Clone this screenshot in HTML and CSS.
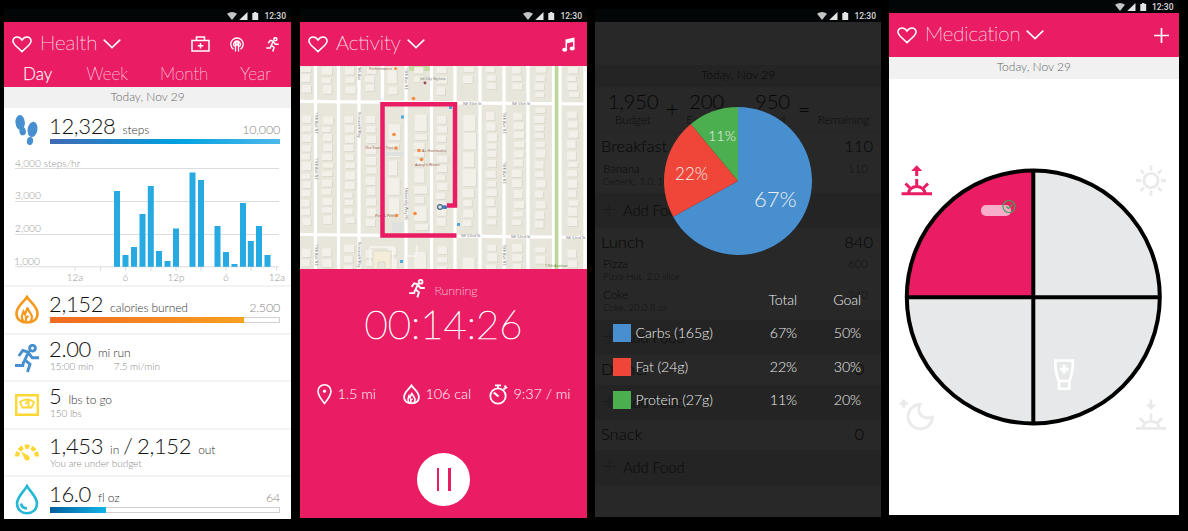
FILE: index.html
```html
<!DOCTYPE html>
<html lang="en">
<head>
<meta charset="utf-8">
<title>Health</title>
<link rel="stylesheet" href="styles.css">
</head>
<body>
<svg class="defs" width="0" height="0">
  <defs>
    <symbol id="status" viewBox="0 0 32 8"><path d="M0 1.8Q5 -1.6 10 1.8L5 8Z" fill="#c4c4c4"/><path d="M20.500 0V8H12.200Z" fill="#e4e4e4"/><path d="M25.300 1H27V0H29.500V1H31.200V8H25.300Z" fill="#e4e4e4"/></symbol>
    <symbol id="heart" viewBox="0 0 20 17"><path d="M10 15.600L3.200 9.200C-1.200 4.800 1.700 1 5 1C7.500 1 9.200 2.700 10 4C10.800 2.700 12.500 1 15 1C18.300 1 21.200 4.800 16.800 9.200Z" fill="none" stroke="#fff" stroke-width="1.500"/></symbol>
    <symbol id="chevron" viewBox="0 0 18 10"><path d="M.7 .7L9 8.700L17.300 .7" fill="none" stroke="#fff" stroke-width="1.600"/></symbol>
    <symbol id="runner" viewBox="0 0 24 29"><g fill="none" stroke="currentColor" stroke-width="2.900"><circle cx="17.500" cy="4.200" r="2.900"/><path d="M3.800 12L7.800 6.500L13.500 8.200L9.800 16L15 20.200L12.500 28M13.500 9L17.300 13.800H24M8.800 17L7.800 21.500H0"/></g></symbol>
    <symbol id="flame" viewBox="0 0 24 29"><path d="M12 2C15 7 22.500 11 22.500 18.500C22.500 24.500 18 27.500 12 27.500S1.500 24.500 1.500 18.500C1.500 11 9 7 12 2Z" fill="none" stroke="currentColor" stroke-width="2.600"/><path d="M9 27C5.500 23 7 20 8.500 16.500L10 19.500L12.500 12.500C13 16 17 19 17 22C17 24 16 26 15 27M11 27V22.500L13.500 21" fill="none" stroke="currentColor" stroke-width="2.200"/></symbol>
  </defs>
</svg>
<main class="screens">

<section class="phone health">
  <div class="status"><svg class="status-icons"><use href="#status"/></svg><span>12:30</span></div>
  <header class="bar">
    <svg class="heart"><use href="#heart"/></svg><h1>Health</h1><svg class="chevron"><use href="#chevron"/></svg>
    <div class="actions">
      <svg width="19" height="16" viewBox="0 0 19 16" fill="none" stroke="#fff" stroke-width="1.500"><path d="M1 4.500H18V15H1ZM5.500 4.500V1H13.500V4.500M9.500 7V12.500M6.700 9.700H12.300"/></svg>
      <svg width="14" height="15" viewBox="0 0 14 15" fill="none" stroke="#fff" stroke-width="1.300"><path d="M3.500 12.300A6.200 6.200 0 1 1 10.500 12.300M4.500 9.500A3.300 3.300 0 1 1 9.500 9.500M5.500 14.500V8M8.500 14.500V8M5.500 4.500V8H8.500V4.500M7 4.500V8"/></svg>
      <svg class="run-small"><use href="#runner"/></svg>
    </div>
  </header>
  <nav class="tabs"><span class="tab active">Day</span><span class="tab">Week</span><span class="tab">Month</span><span class="tab">Year</span></nav>
  <div class="date">Today, Nov 29</div>

  <article class="metric first">
    <svg width="24" height="31" viewBox="0 0 24 31" fill="#478fcf"><ellipse cx="5.200" cy="7.500" rx="4.700" ry="7.500" transform="rotate(-4 5 8)"/><ellipse cx="7.800" cy="16.300" rx="3.200" ry="4" transform="rotate(-10 8 17)"/><ellipse cx="17.600" cy="14.500" rx="4.900" ry="7.700" transform="rotate(10 18 14)"/><ellipse cx="15" cy="26" rx="3.100" ry="4" transform="rotate(10 15 26)"/></svg>
    <div>
      <p class="line"><b>12,328</b><span>steps</span><em>10,000</em></p>
      <div class="meter full"></div>
    </div>
  </article>
  <svg class="chart" width="287" height="133" viewBox="4 152 287 133">
    <g class="grid"><path d="M15 168.500H279M15 201.500H279M15 234.500H279M15 266.800H279"/><path d="M75 267V271M100.500 267V271M125.500 267V271M151 267V271M176 267V271M201 267V271M226 267V271M251 267V271M276.500 267V271"/></g>
    <g id="bars" class="bars"></g>
    <g class="axis"><text x="15" y="166.500">4,000 steps/hr</text><text x="15" y="199">3,000</text><text x="15" y="232">2,000</text><text x="14" y="265">1,000</text></g>
    <g class="axis hours"><text x="75" y="281">12a</text><text x="125.500" y="281">6</text><text x="176" y="281">12p</text><text x="226" y="281">6</text><text x="277" y="281">12a</text></g>
  </svg>
  <article class="metric">
    <svg class="flame orange" width="24" height="29"><use href="#flame"/></svg>
    <div>
      <p class="line"><b>2,152</b><span>calories burned</span><em>2,500</em></p>
      <div class="meter"><div class="fill burn"></div></div>
    </div>
  </article>
  <article class="metric two">
    <svg class="blue" width="24" height="29"><use href="#runner"/></svg>
    <div>
      <p class="line"><b>2.00</b><span>mi run</span></p>
      <p class="sub"><span>15:00 min</span><span>7.5 mi/min</span></p>
    </div>
  </article>
  <article class="metric two">
    <svg class="scale" width="24" height="22" viewBox="0 0 24 22" fill="none" stroke="#fdd835" stroke-width="2.400"><path d="M1.200 1.200H22.800V20.800H1.200Z"/><path d="M5 8Q12 3 19 8L16.500 13.500H7.500ZM10.500 10L13.500 6.500V13" stroke-width="1.800"/></svg>
    <div>
      <p class="line"><b>5</b><span>lbs to go</span></p>
      <p class="sub">150 lbs</p>
    </div>
  </article>
  <article class="metric two budget">
    <svg width="24" height="17" viewBox="0 0 24 17"><path d="M2.100 12.500A9.900 9.900 0 0 1 21.900 12.500" fill="none" stroke="#fdd835" stroke-width="4.200" stroke-dasharray="4.700 1.900"/><path d="M6 7.500L13.500 11.800A2.600 2.600 0 1 1 9.800 15.200Z" fill="#fdd835"/></svg>
    <div>
      <p class="line"><b>1,453</b><span>in</span><b class="slash">/ 2,152</b><span>out</span></p>
      <p class="sub">You are under budget</p>
    </div>
  </article>
  <article class="metric water">
    <svg width="24" height="31" viewBox="0 0 24 31" fill="none" stroke="#22b8d6" stroke-width="2.600"><path d="M12 2C15 7.500 22 13 22 19.500C22 25.500 17.500 29.200 12 29.200S2 25.500 2 19.500C2 13 9 7.500 12 2Z"/><path d="M6 19.500Q6.500 24 12 24.500"/></svg>
    <div>
      <p class="line"><b>16.0</b><span>fl oz</span><em>64</em></p>
      <div class="meter"><div class="fill drink"></div></div>
    </div>
  </article>
</section>

<section class="phone activity">
  <div class="status"><svg class="status-icons"><use href="#status"/></svg><span>12:30</span></div>
  <header class="bar">
    <svg class="heart"><use href="#heart"/></svg><h1>Activity</h1><svg class="chevron"><use href="#chevron"/></svg>
    <div class="actions"><svg width="13" height="15" viewBox="0 0 13 15" fill="#fff"><path d="M3.500 2.500L12.500 .5V11.500H11V5L5 6.300V13H3.500Z"/><ellipse cx="2.700" cy="12.700" rx="2.500" ry="2"/><ellipse cx="10.200" cy="11.500" rx="2.500" ry="2"/></svg></div>
  </header>
  <svg class="map" width="287" height="203" viewBox="300 66 287 203">
    <rect x="300" y="66" width="287" height="203" fill="#e8e5da"/>
    <rect x="409" y="66" width="21" height="5" fill="#c4dda3"/>
    <g id="houses"></g>
    <g fill="none" stroke="#fff" stroke-width="3.200">
      <path d="M315.500 66V269M338.500 66V269M359 66V269M382.500 66V235M406 66V269M431.500 66V269M455 66V269M480 66V269M504 66V269M528 66V269M553.500 66V269M560 66V269M585 66V269"/>
      <path d="M300 101.300L587 104M300 234.500L587 237.500"/>
    </g>
    <path d="M556.500 66V269" stroke="#bdd79b" stroke-width="3.500"/>
    <path d="M385 152H404V156H385ZM392 232V222H404V232Z" fill="#dfe1df"/>
    <path d="M370 265V247H393V266M408 256H417V245" fill="none" stroke="#f6f5f1" stroke-width="1.500"/>
    <path d="M373 251H391V269H385V262H378V269H373Z" fill="#f3edd9" stroke="#d9d5c6" stroke-width=".8"/>
    <g class="street"><text x="463" y="105">NE 55th St</text><text x="512" y="105">NE 55th St</text><text x="461" y="237">NE 52nd St</text><text x="511" y="237.500">NE 52nd St</text><text x="566" y="238.500">NE 52nd St</text>
      <text transform="translate(314.500 158) rotate(90)">11th Ave NE</text><text transform="translate(314.500 112) rotate(90)">11th Ave NE</text><text transform="translate(358 112) rotate(90)">Roosevelt Way</text><text transform="translate(405 188) rotate(90)">University Way NE</text><text transform="translate(405 68) rotate(90)">12th Ave NE</text><text transform="translate(358 67) rotate(90)">9th Ave</text><text transform="translate(503 112) rotate(90)">15th Ave NE</text><text transform="translate(503 162) rotate(90)">15th Ave NE</text><text transform="translate(503 244) rotate(90)">15th Ave NE</text><text transform="translate(358 242) rotate(90)">Roosevelt Way</text><text transform="translate(314.500 244) rotate(90)">11th Ave NE</text><text x="420" y="79.500">Jet City Stylists</text><text x="545" y="267" class="green">17th Avenue</text></g>
    <g class="place"><text x="369" y="69.500">Performance</text><text x="365" y="149">The Scarlet Tree</text><text x="422" y="151.500">A+ Hairstudio</text><text x="415" y="166">Avery's Wines</text><text x="375" y="217">Pies &amp; Pints</text></g>
    <g fill="#f58b3d"><circle cx="395.500" cy="68.500" r="1.500"/><circle cx="413.500" cy="98.500" r="1.800"/><circle cx="394" cy="134.500" r="1.800"/><circle cx="396" cy="148" r="1.800"/><circle cx="419" cy="150.500" r="1.800"/><circle cx="421.500" cy="159.500" r="1.800"/><circle cx="396.500" cy="215.500" r="1.700"/><circle cx="415" cy="213.500" r="1.800"/></g>
    <circle cx="425" cy="83" r="1.400" fill="#a8405c"/>
    <path d="M401 115.500H404V118.500H401ZM449 106H452V109H449ZM457 223H460V226H457ZM400 260H403V263H400Z" fill="#4ba9de"/>
    <circle cx="440" cy="207" r="2.400" fill="#dce5e9" stroke="#496680" stroke-width="1.200"/><rect x="442.500" y="205.300" width="4.500" height="3.800" rx="1.500" fill="#3f78bd"/>
    <path d="M447 205.500H455V104.200H382.500V235.500H456.500" fill="none" stroke="#e91c64" stroke-width="4.500"/>
  </svg>
  <div class="session">
    <p class="mode"><svg width="16" height="19"><use href="#runner"/></svg><span>Running</span></p>
    <p class="timer">00:14:26</p>
    <div class="stats">
      <p><svg width="15" height="21" viewBox="0 0 15 21" fill="none" stroke="#fff" stroke-width="1.600"><path d="M7.500 19.500Q1 11.500 1 7.200A6.500 6.400 0 0 1 14 7.200Q14 11.500 7.500 19.500Z"/><circle cx="7.500" cy="7.200" r="1.600" fill="#fff" stroke="none"/></svg><span>1.5 mi</span></p>
      <p><svg width="17" height="20.500"><use href="#flame"/></svg><span>106 cal</span></p>
      <p><svg width="19" height="21" viewBox="0 0 19 21" fill="none" stroke="#fff" stroke-width="1.800"><circle cx="9" cy="12" r="7.700"/><path d="M6 1.300H12M9 1V4M14.500 5.500L17 3M15.500 1.700L18 4.200"/><path d="M9.500 12.500L4.800 8.500" stroke-width="2.200"/></svg><span>9:37 / mi</span></p>
    </div>
    <div class="pause"><i></i><i></i></div>
  </div>
</section>

<section class="phone food">
  <div class="status"><svg class="status-icons"><use href="#status"/></svg><span>12:30</span></div>
  <div class="diary">
    <div class="blank"></div>
    <div class="date">Today, Nov 29</div>
    <div class="totals"><p><b>1,950</b><span>Budget</span></p><i>+</i><p><b>200</b><span>Exercise</span></p><i></i><p><b>950</b><span>Food</span></p><i>=</i><p><b>&nbsp;</b><span>Remaining</span></p></div>
    <div class="meal"><span>Breakfast</span><span>110</span></div>
    <div class="item"><p><b>Banana</b><span>110</span></p><small>Generic, 1.0, 100g</small></div>
    <div class="add"><i></i><span>Add Food</span></div>
    <div class="meal lunch"><span>Lunch</span><span>840</span></div>
    <div class="item lunch-item"><p><b>Pizza</b><span>600</span></p><small>Pizza Hut, 2.0 slice</small></div>
    <div class="item"><p><b>Coke</b><span>240</span></p><small>Coke, 20.0 fl oz</small></div>
    <div class="add"><i></i><span>Add Food</span></div>
    <div class="meal empty"><span>Dinner</span><span>0</span></div>
    <div class="add"><i></i><span>Add Food</span></div>
    <div class="meal empty"><span>Snack</span><span>0</span></div>
    <div class="add"><i></i><span>Add Food</span></div>
  </div>
  <div class="overlay">
    <svg class="pie" width="148" height="148" viewBox="-74 -74 148 148">
      <path d="M0 0V-74A74 74 0 1 1 -64.850 35.650Z" fill="#478fcf"/><path d="M0 0L-64.850 35.650A74 74 0 0 1 -47.170 -57.020Z" fill="#ef4639"/><path d="M0 0L-47.170 -57.020A74 74 0 0 1 0 -74Z" fill="#4baf4f"/>
      <text x="37.300" y="26" font-size="22">67%</text><text x="-46.500" y="-1.500" font-size="17">22%</text><text x="-16" y="-40.500" font-size="14.500">11%</text>
    </svg>
    <div class="legend">
      <div class="entry head"><span></span><span></span><span>Total</span><span>Goal</span></div>
      <div class="entry"><i class="carbs"></i><span>Carbs (165g)</span><span>67%</span><span>50%</span></div>
      <div class="entry"><i class="fat"></i><span>Fat (24g)</span><span>22%</span><span>30%</span></div>
      <div class="entry"><i class="protein"></i><span>Protein (27g)</span><span>11%</span><span>20%</span></div>
    </div>
  </div>
</section>

<section class="phone medication">
  <div class="status"><svg class="status-icons"><use href="#status"/></svg><span>12:30</span></div>
  <header class="bar">
    <svg class="heart"><use href="#heart"/></svg><h1>Medication</h1><svg class="chevron"><use href="#chevron"/></svg>
    <div class="actions"><svg width="15" height="15" viewBox="0 0 15 15"><path d="M7.500 0V15M0 7.500H15" stroke="#fff" stroke-width="1.700"/></svg></div>
  </header>
  <div class="date">Today, Nov 29</div>
  <svg class="wheel" width="290" height="436" viewBox="889 79 290 436">
    <circle cx="1033.300" cy="297" r="127" fill="#e7e8e9"/>
    <path d="M1033.300 297V170A127 127 0 0 0 906.300 297Z" fill="#e91c64"/>
    <circle cx="1033.300" cy="297" r="126.500" fill="none" stroke="#000" stroke-width="4"/>
    <path d="M1033.300 170V424M906 297.300H1160" stroke="#000" stroke-width="4"/>
    <rect x="981" y="205" width="30" height="11" rx="5" fill="#f8aeca"/>
    <g fill="none" stroke="#3fa756" stroke-width="1.200"><circle cx="1009" cy="206.500" r="6"/><path d="M1006 206.500L1008.500 208.500L1012.500 204.500"/></g>
    <g fill="none" stroke="#fff" stroke-width="2.600"><path d="M1055.400 360.500H1072.800Q1073.300 371 1069.500 381H1058.700Q1054.900 371 1055.400 360.500ZM1059 381.500V388.700H1069.300V381.500"/><path d="M1064.200 365V373.500M1060 369.200H1068.500" stroke-width="3"/></g>
    <g fill="none" stroke="#e91c64" stroke-width="3"><path d="M901.500 193.800H932M908.500 193A8.300 7.300 0 0 1 925 193" /><path d="M916.700 179V185.500M905.500 183.500L910 188M928 183.500L923.500 188M916.700 170V176"/><path d="M911.200 171L916.700 165.300L922.200 171Z" fill="#e91c64" stroke="none"/></g>
    <g fill="none" stroke="#e9eaeb" stroke-width="2.800"><circle cx="1151" cy="180.500" r="7.200"/><path d="M1151 165.300V170.500M1151 190.500V195.700M1136 180.500H1141M1161 180.500H1166M1140.500 170L1144 173.500M1158 187.500L1161.500 191M1140.500 191L1144 187.500M1158 173.500L1161.500 170"/></g>
    <g fill="none" stroke="#e9eaeb" stroke-width="2.800"><path d="M920 404.500A12.200 12.200 0 1 0 932.500 417C923 420.500 916 413 920 404.500Z"/><path d="M903.700 399.500V407.700M899.600 403.600H907.800" stroke-width="3"/></g>
    <g fill="none" stroke="#e9eaeb" stroke-width="2.800"><path d="M1136 428.300H1166M1142.800 427.500A8.300 7.300 0 0 1 1159.200 427.500M1151 413.500V420M1139.700 418L1144.200 422.500M1162.200 418L1157.700 422.500M1151 399.500V405"/><path d="M1145.800 404.500L1151 410L1156.200 404.500Z" fill="#e9eaeb" stroke="none"/></g>
  </svg>
</section>
</main>
<script src="draw.js"></script>
</body>
</html>
```

FILE: styles.css
```css
* { box-sizing: border-box; }
body { margin: 0; background: #000; font-family: Lato, "Liberation Sans", sans-serif; font-weight: 300; }
p, h1 { margin: 0; }
b, em, i { font-weight: inherit; font-style: normal; }
svg { display: block; flex: none; }
.defs { position: absolute; }
.screens { display: flex; align-items: flex-start; width: 1188px; height: 531px; padding: 9px 0 0 4px; overflow: hidden; }

.phone { width: 287px; flex: none; background: #fff; }
.status { height: 13px; background: #030607; color: #ddd; display: flex; justify-content: flex-end; align-items: center; gap: 5px; padding: 1px 5px 0 0; font: 500 8.5px/12px Roboto, sans-serif; }
.status-icons { width: 32px; height: 8px; }
.bar { height: 44px; background: #e91c64; display: flex; align-items: center; padding: 0 12px 0 8px; color: #fff; }
.bar h1 { font-size: 20.500px; line-height: 24px; font-weight: 100; margin: 0 6px 4px 8px; -webkit-text-stroke: .3px rgba(255,255,255,.75); }
.heart { width: 20px; height: 17px; }
.chevron { width: 18px; height: 10px; }
.actions { display: flex; align-items: center; margin-left: auto; gap: 20px; }
.run-small { width: 13px; height: 15px; margin-left: 2px; }
.tabs { height: 21px; background: #e91c64; color: #fff; display: flex; justify-content: space-between; padding: 0 20px 0 19px; font-size: 17px; line-height: 15px; font-weight: 100; -webkit-text-stroke: .25px rgba(255,255,255,.6); }
.tab.active { font-weight: 300; }
.tab:nth-child(2) { margin-left: 2px; }
.date { height: 21px; background: #f1f1f1; color: #666; font-size: 12px; line-height: 20px; text-align: center; }

.metric { height: 47.500px; border-top: 2px solid #f3f3f3; display: grid; grid-template-columns: 24px 230px; column-gap: 11px; padding: 5px 0 0 11px; }
.metric > svg { margin-top: 3px; }
.metric.first { height: 44px; border-top: 0; padding-top: 6px; }
.metric.first > svg { margin-top: 1px; }
.line { display: flex; align-items: baseline; height: 24px; line-height: 24px; color: #111; }
.line b { font-size: 22px; letter-spacing: -.35px; margin: 0 7px 0 -1px; }
.line span { font-size: 12px; letter-spacing: -.1px; color: #333; }
.line em { margin-left: auto; font-size: 12.500px; letter-spacing: -.2px; color: #888; }
.line .slash { margin-left: 4px; word-spacing: -1px; }
.meter { margin-top: 1px; height: 5.500px; border: 1px solid #d0d0d0; }
.meter.full { border: 0; height: 5px; background: linear-gradient(90deg, #4169b4, #00a1e0 55%, #4db8ea); }
.fill { height: 5.500px; margin: -1px 0 0 -1px; }
.burn { width: 194px; background: linear-gradient(90deg, #f16a22, #f9a01f); }
.drink { width: 56px; background: linear-gradient(90deg, #005f9e, #14b4e6); }
.metric.two { padding-top: 3px; }
.metric.two .line { height: 22px; line-height: 22px; }
.metric.two > svg { margin-top: 6px; }
.metric.two > .scale { margin-top: 9px; }
.metric.budget { padding-top: 5px; }
.metric.budget > svg { margin-top: 9px; }
.metric.water { height: 44px; }
.metric.water > svg { margin-top: 2px; }
.sub { display: flex; gap: 20px; font-size: 10px; line-height: 12px; letter-spacing: -.05px; color: #888; }
.orange { color: #f7981d; }
.blue { color: #478fcf; }
.grid { stroke: #dcdcdc; stroke-width: 1; }
.bars { fill: #27aae1; }
.axis { fill: #949494; font-size: 10.200px; }
.hours { text-anchor: middle; font-size: 10px; }

.activity { margin-left: 9px; height: 509px; background: #e91c64; }
.street { font: 400 3.800px "Noto Sans", sans-serif; fill: #77787a; }
.street .green { fill: #5d8a43; }
.place { font: 400 3.800px "Noto Sans", sans-serif; fill: #9a5b4b; }
.session { color: #fff; display: flex; flex-direction: column; align-items: center; padding-top: 10px; }
.mode { display: flex; align-items: flex-start; gap: 9px; font-size: 12.500px; font-weight: 100; line-height: 23px; height: 19px; -webkit-text-stroke: .25px rgba(255,255,255,.7); }
.timer { font-size: 40px; line-height: 48px; font-weight: 100; margin-top: 2px; -webkit-text-stroke: .6px #fff; }
.stats { display: grid; grid-template-columns: 86px 86px 1fr; align-self: stretch; padding-left: 16.500px; margin-top: 36px; height: 21px; font-size: 14.500px; line-height: 19px; }
.stats p { display: flex; gap: 6px; letter-spacing: -.1px; }
.pause { width: 53px; height: 53px; border-radius: 50%; background: #fff; margin-top: 48px; display: flex; justify-content: center; align-items: center; gap: 9px; }
.pause i { width: 2.500px; height: 23px; background: #e91c64; }

.food { margin-left: 8px; width: 286px; height: 508px; background: #282828; position: relative; }
.diary { color: #070707; }
.blank { height: 43px; }
.food .date { height: 22px; background: #242424; color: #070707; }
.totals { height: 46px; display: grid; grid-template-columns: 76px 1px 69px 1px 61px 1px 1fr; text-align: center; border-bottom: 1px solid #242424; }
.totals p { padding-top: 1px; }
.totals p:last-child { padding-left: 2px; }
.totals b { display: block; font-size: 20.500px; line-height: 26px; letter-spacing: -.3px; }
.totals span { display: block; font-size: 11.800px; line-height: 11px; letter-spacing: -.1px; color: #0c0c0c; }
.totals i { font-size: 21px; line-height: 44px; width: 20px; margin-left: -9px; }
.meal { height: 29px; display: flex; justify-content: space-between; padding: 0 8px 0 6px; font-size: 16.500px; line-height: 26px; }
.meal.lunch { height: 28px; padding-top: 1px; }
.meal.empty { height: 30px; line-height: 28px; padding-right: 17px; }
.item { height: 31px; padding: 0 13px 0 8px; color: #0a0a0a; }
.item p { display: flex; justify-content: space-between; font-size: 11.500px; line-height: 14px; }
.item p span { color: #141414; }
.item small { display: block; font-size: 9.500px; line-height: 12px; color: #101010; }
.item.lunch-item { height: 31px; padding-top: 1px; }
.lunch-item + .item { padding-top: 1px; height: 33px; }
.add { height: 35px; background: #242424; display: flex; align-items: center; gap: 7px; padding: 0 0 2px 8px; font-size: 14.800px; letter-spacing: -.1px; color: #0a0a0a; }
.add i { width: 13px; height: 13px; background: linear-gradient(#1c1c1c, #1c1c1c) center / 13px 1px no-repeat, linear-gradient(#1c1c1c, #1c1c1c) center / 1px 13px no-repeat; }
.overlay { position: absolute; inset: 0; padding-top: 97.500px; color: #eee; }
.pie { margin-left: 69px; fill: #eee; text-anchor: middle; }
.legend { margin-top: 35px; font-size: 14.200px; line-height: 20px; letter-spacing: -.1px; }
.entry { height: 33.500px; display: grid; grid-template-columns: 19px 105px 52px 60px; column-gap: 4px; padding-left: 18px; align-items: start; }
.entry span:nth-child(2) { margin-left: -.5px; }
.entry span:nth-child(n+3) { text-align: right; }
.entry i { width: 18px; height: 18px; margin-top: 1px; }
.carbs { background: #478fcf; }
.fat { background: #ef4639; }
.protein { background: #4baf4f; }

.medication { margin: -9px 0 0 8px; width: 289.500px; }
.medication .bar { padding-right: 10px; }
.medication .bar h1 { letter-spacing: -.1px; margin-right: 5px; }
.medication .date { height: 22px; }
```

FILE: draw.js
```js
const NS = "http://www.w3.org/2000/svg";
function rect(parent, x, y, w, h, fill) {
  const r = document.createElementNS(NS, "rect");
  Object.entries({ x, y, width: w, height: h }).forEach(([k, v]) => r.setAttribute(k, v));
  if (fill) r.setAttribute("fill", fill);
  parent.appendChild(r);
}

// Hourly step bars: [centre x, top y]
const bars = document.getElementById("bars");
[[117, 191], [125.5, 255], [134, 247], [142.5, 214], [150.800, 186], [159, 251], [167.500, 261], [176, 228.500],
 [192.500, 172.500], [201, 180], [217.500, 226], [226, 252], [234.500, 264], [243, 203], [250.800, 241], [259, 226], [267.500, 255]]
  .forEach(([x, y]) => rect(bars, x - 3, y, 6, 266.800 - y));

// Houses, one column per block between streets
const houses = document.getElementById("houses");
let seed = 7;
const rnd = () => (seed = (seed * 16807) % 2147483647) / 2147483647;
[300.500, 321.500, 343.500, 365, 387, 413.500, 436, 462, 485.500, 512, 534, 567].forEach((x, col) => {
  const wide = col === 4 || col === 5 || col === 7;
  for (let y = 67; y < 266;) {
    const h = 5 + rnd() * 3.500 + (wide && rnd() > 0.6 ? 9 : 0);
    const w = (col === 0 ? 8 : 8.500) + rnd() * (wide ? 5 : 2);
    const road = (y + h > 98 && y < 107) || (y + h > 231 && y < 240);
    if (!road) {
      const dx = rnd() * 2;
      rect(houses, x + dx + 0.9, y + 0.8, w, h, "#d9d7cc");
      rect(houses, x + dx, y, w, h, "#f2f0e8");
    }
    y += h + 2 + rnd() * 1.500;
  }
});
```
